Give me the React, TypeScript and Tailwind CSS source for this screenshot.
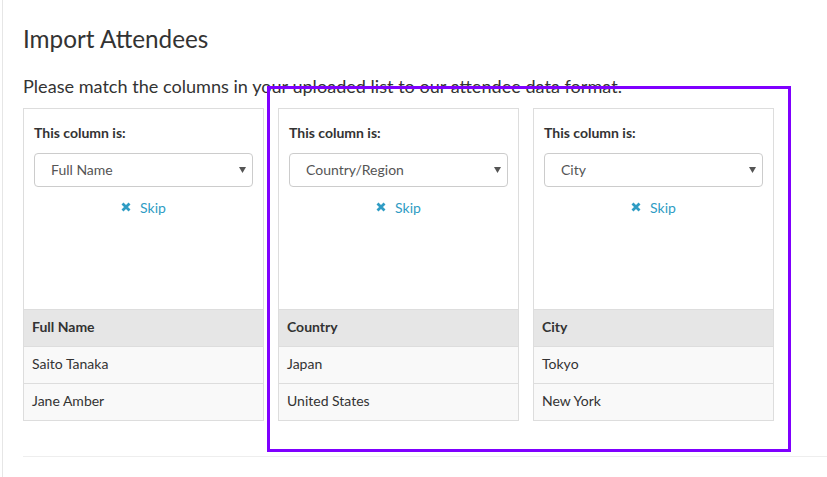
import React from "react"

type Column = {
	mapped: string
	header: string
	rows: string[]
}

const columns: Column[] = [
	{ mapped: "Full Name", header: "Full Name", rows: ["Saito Tanaka", "Jane Amber"] },
	{ mapped: "Country/Region", header: "Country", rows: ["Japan", "United States"] },
	{ mapped: "City", header: "City", rows: ["Tokyo", "New York"] },
]

const SkipIcon = () => (
	<svg width="10" height="10" viewBox="0 0 10 10" className="shrink-0">
		<path d="M1.5 1.5 L8.5 8.5 M8.5 1.5 L1.5 8.5" stroke="#2f9cc4" strokeWidth="2.8" strokeLinecap="butt" />
	</svg>
)

const ColumnCard = ({ col }: { col: Column }) => (
	<div className="w-[241px] shrink-0 border border-[#dddddd] bg-white">
		<div className="h-[200px] px-[10px] pt-[14px]">
			<div className="text-[14px] leading-[20px] font-bold text-[#333333]">This column is:</div>
			<div className="mt-[10px] flex h-[34px] items-center justify-between rounded-[4px] border border-[#cccccc] pl-[16px] pr-[6px]">
				<span className="text-[14px] leading-[20px] text-[#555555]">{col.mapped}</span>
				<svg width="7" height="6" viewBox="0 0 7 6">
					<path d="M0 0 H7 L3.5 6 Z" fill="#555555" />
				</svg>
			</div>
			<div className="mt-[10px] flex h-[20px] items-center justify-center gap-[9px] text-[14px] text-[#2f9cc4]">
				<SkipIcon />
				<span>Skip</span>
			</div>
		</div>
		<div className="flex h-[37px] items-center border-t border-[#dddddd] bg-[#e6e6e6] px-[8px] pb-[3px] text-[14px] font-bold text-[#333333]">
			{col.header}
		</div>
		{col.rows.map((r) => (
			<div
				key={r}
				className="flex h-[37px] items-center border-t border-[#dddddd] bg-[#f9f9f9] px-[8px] pb-[3px] text-[14px] text-[#333333]"
			>
				{r}
			</div>
		))}
	</div>
)

export default function App() {
	return (
		<div className="relative h-[477px] w-[827px] overflow-hidden bg-white" style={{ fontFamily: "Lato, 'Liberation Sans', sans-serif" }}>
			<div className="ml-[2px] h-full border-l border-[#e6e6e6] pl-[20px]">
				<h1 className="pt-[26px] text-[24.3px] leading-[26px] text-[#333333]">Import Attendees</h1>
				<p className="mt-[21px] text-[18.1px] leading-[26px] text-[#333333]">
					Please match the columns in your uploaded list to our attendee data format.
				</p>
				<div className="mt-[9px] flex gap-[14px]">
					{columns.map((c) => (
						<ColumnCard key={c.header} col={c} />
					))}
				</div>
				<div className="mt-[35px] border-t border-[#eeeeee]" />
			</div>
			{/* highlight overlay */}
			<div className="pointer-events-none absolute left-[267px] top-[86px] h-[366px] w-[524px] border-[3px] border-[#7f00ff]" />
		</div>
	)
}
